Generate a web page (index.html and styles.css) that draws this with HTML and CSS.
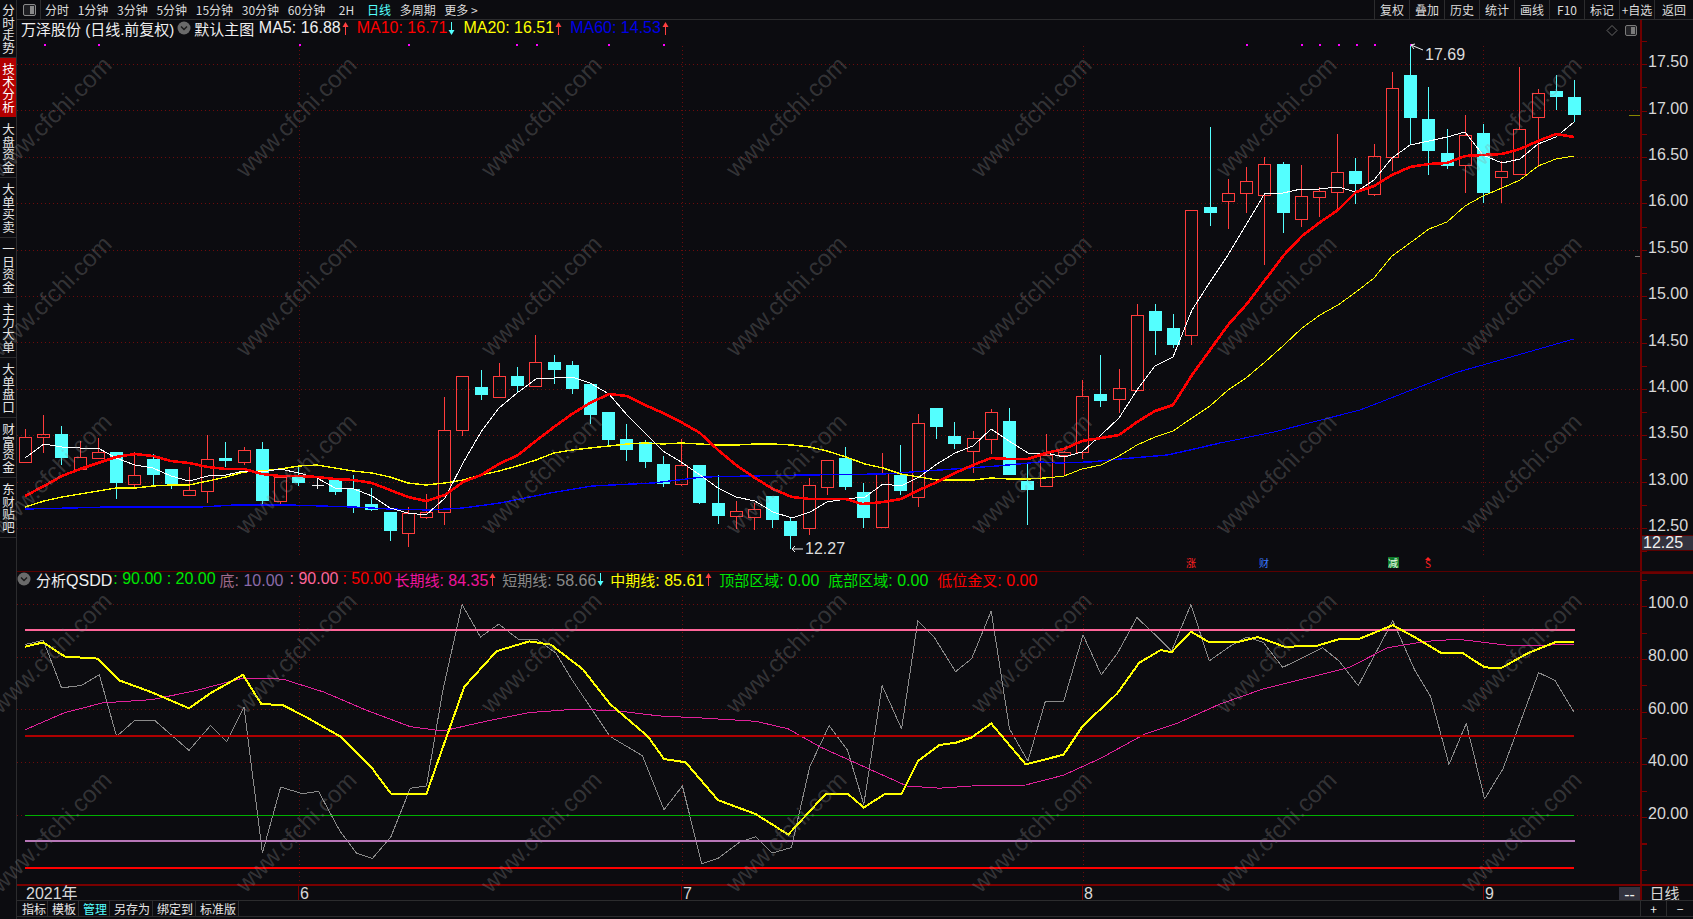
FILE: index.html
```html
<!DOCTYPE html>
<html lang="zh-CN">
<head>
<meta charset="utf-8">
<title>万泽股份 日线</title>
<link rel="stylesheet" href="styles.css">
</head>
<body>
<svg class="defs" width="0" height="0"><defs>
  <g id="arrow-up"><path class="arr-stem" d="M4.5 6V16"/><path class="arr-head" d="M4.5 3 7.5 8H1.5Z"/></g>
  <g id="arrow-down"><path class="arr-stem" d="M4.5 3V13"/><path class="arr-head" d="M4.5 16 7.5 11H1.5Z"/></g>
</defs></svg>
<div class="app">
  <nav class="side">
    <a class="side-tab first">分时走势</a>
    <a class="side-tab active">技术分析</a>
    <a class="side-tab">大盘资金</a>
    <a class="side-tab">大单买卖</a>
    <a class="side-tab">一日资金</a>
    <a class="side-tab">主力大单</a>
    <a class="side-tab">大单盘口</a>
    <a class="side-tab">财富资金</a>
    <a class="side-tab">东财贴吧</a>
  </nav>
  <main class="main">
    <header class="toolbar">
      <div class="tb-icon"><svg width="13" height="12" viewBox="0 0 13 12"><rect class="ic-frame" x="0.5" y="0.5" width="12" height="11" rx="1.5"/><rect class="ic-fill" x="7" y="2" width="4" height="8"/></svg></div>
      <div class="periods">
        <a>分时</a><a>1分钟</a><a>3分钟</a><a>5分钟</a><a>15分钟</a><a>30分钟</a><a>60分钟</a><a class="p-2h">2H</a><a class="cyan">日线</a><a>多周期</a><a>更多 &gt;</a>
      </div>
      <div class="tools">
        <a>复权</a><a>叠加</a><a>历史</a><a>统计</a><a>画线</a><a>F10</a><a>标记</a><a>+自选</a><a>返回</a>
      </div>
    </header>

    <section class="pane price-pane">
      <div class="legend price-legend">
        <span class="c-white zh">万泽股份 (日线.前复权)</span>
        <svg class="dot-ic" width="14" height="14" viewBox="0 0 14 14"><circle cx="7" cy="7" r="6.5"/><path d="M4 5.5 7 8.5 10 5.5"/></svg>
        <span class="c-white zh">默认主图</span>
        <span class="c-white first-ma">MA5: 16.88</span><svg class="arr up" width="16" height="18"><use href="#arrow-up"/></svg>
        <span class="c-red">MA10: 16.71</span><svg class="arr down" width="16" height="18"><use href="#arrow-down"/></svg>
        <span class="c-yellow">MA20: 16.51</span><svg class="arr up" width="16" height="18"><use href="#arrow-up"/></svg>
        <span class="c-blue">MA60: 14.53</span><svg class="arr up" width="16" height="18"><use href="#arrow-up"/></svg>
      </div>
      <svg id="price-plot" class="plot" width="1623" height="551" viewBox="17 20 1623 551"></svg>
      <div class="axis price-axis">
        <div class="tick">17.50</div><div class="tick">17.00</div><div class="tick">16.50</div><div class="tick">16.00</div><div class="tick">15.50</div><div class="tick">15.00</div><div class="tick">14.50</div><div class="tick">14.00</div><div class="tick">13.50</div><div class="tick">13.00</div><div class="tick">12.50</div>
        <div class="price-tag">12.25</div>
      </div>
    </section>

    <section class="pane ind-pane">
      <div class="legend ind-legend">
        <svg class="dot-ic" width="14" height="14" viewBox="0 0 14 14"><circle cx="7" cy="7" r="6.5"/><path d="M4 5.5 7 8.5 10 5.5"/></svg>
        <span class="c-white"><span class="zh">分析</span>QSDD</span>
        <span class="c-green val1">: 90.00 : 20.00</span>
        <span class="c-mauve val2"><span class="zh">底</span>: <span class="c-purple">10.00</span></span>
        <span class="c-pink val3a">: 90.00</span>
        <span class="c-red val3b">: 50.00</span>
        <span class="c-magenta val4"><span class="zh">长期线</span>: 84.35</span><svg class="arr up" width="14" height="18"><use href="#arrow-up"/></svg>
        <span class="c-gray"><span class="zh">短期线</span>: 58.66</span><svg class="arr down" width="14" height="18"><use href="#arrow-down"/></svg>
        <span class="c-yellow"><span class="zh">中期线</span>: 85.61</span><svg class="arr up" width="15" height="18"><use href="#arrow-up"/></svg>
        <span class="c-green"><span class="zh">顶部区域</span>: 0.00</span>
        <span class="c-green val5"><span class="zh">底部区域</span>: 0.00</span>
        <span class="c-red val5"><span class="zh">低位金叉</span>: 0.00</span>
      </div>
      <svg id="ind-plot" class="plot" width="1623" height="312" viewBox="17 572 1623 312"></svg>
      <div class="axis ind-axis">
        <div class="tick">100.0</div><div class="tick">80.00</div><div class="tick">60.00</div><div class="tick">40.00</div><div class="tick">20.00</div>
      </div>
    </section>

    <div class="time-axis">
      <div class="t-cell t-year">2021年</div>
      <div class="t-cell t-jun">6</div>
      <div class="t-cell t-jul">7</div>
      <div class="t-cell t-aug">8</div>
      <div class="t-cell t-sep">9</div>
      <div class="t-dash">--</div>
      <div class="t-period">日线</div>
    </div>

    <footer class="bottom-bar">
      <div class="bottom-tabs">
        <a>指标</a><a>模板</a><a class="cyan">管理</a><a>另存为</a><a>绑定到</a><a>标准版</a>
      </div>
      <div class="zoom-btns"><a>+</a><a>−</a></div>
    </footer>
  </main>
  <div id="watermark" class="watermark"></div>
</div>
<script src="chart.js"></script>
</body>
</html>
```
FILE: styles.css
```css
* { box-sizing: border-box; }
html, body { margin: 0; padding: 0; background: #0c0c10; }
body {
  width: 1693px; height: 919px; overflow: hidden;
  font-family: "Liberation Sans", "Noto Sans CJK SC", sans-serif;
  color: #dcdcdc;
}
a { display: block; }
.defs { display: block; height: 0; }

.app { position: relative; display: grid; grid-template-columns: 17px 1676px; width: 1693px; height: 919px; overflow: hidden; }

/* left vertical tabs */
.side { display: flex; flex-direction: column; border-right: 1px solid #2c2c2e; height: 919px; }
.side-tab {
  height: 60px; flex: none; border-bottom: 1px solid #2c2c2e;
  display: flex; align-items: center; justify-content: center;
  writing-mode: vertical-rl; text-orientation: upright;
  font: 12.5px/16px "Noto Sans CJK SC", sans-serif; color: #e6e6e6;
}
.side-tab.first { height: 58px; }
.side-tab.active { background: #b30000; color: #fff; border-bottom: 1px solid #0c0c10; }

/* top toolbar */
.main { display: flex; flex-direction: column; width: 1676px; }
.toolbar { height: 20px; flex: none; display: flex; align-items: stretch; border-bottom: 1px solid #2c2c2e; font: 12px/19px "Noto Sans CJK SC", sans-serif; color: #dcdcdc; }
.tb-icon { width: 24px; display: flex; align-items: center; justify-content: center; border-right: 1px solid #2c2c2e; padding-left: 2px; }
.ic-frame { fill: #1e1e22; stroke: #8a8a8a; }
.ic-fill { fill: #8a8a8a; }
.periods { display: flex; gap: 8.7px; padding-left: 4px; flex: 1; }
.periods a { white-space: nowrap; }
.periods .p-2h { margin-left: 5px; margin-right: 4px; }
.cyan { color: #54ffff; }
.tools { display: flex; }
.tools a { width: 35px; border-left: 1px solid #2c2c2e; text-align: center; }
.tools a:last-child { width: 39px; }

/* panes */
.pane { position: relative; display: grid; grid-template-columns: 1623px 53px; flex: none; }
.price-pane { height: 552px; border-bottom: 1px solid #5a0000; }
.ind-pane { height: 312px; }
.plot { display: block; }
.legend { position: absolute; left: 0; display: flex; align-items: center; white-space: nowrap; font-size: 16px; height: 20px; }
.zh { font-size: 15px; }
.price-legend { top: -2px; padding-left: 4px; }
.price-legend .dot-ic { margin: 0 3px 0 3px; }
.first-ma { margin-left: 4.5px; }
.ind-legend { top: -3px; padding-left: 0; }
.ind-legend .dot-ic { margin-right: 5px; }
.val1 { margin-left: 1px; }
.val2 { margin-left: 4px; }
.val3a { margin-left: 6px; }
.val3b { margin-left: 4px; }
.val4 { margin-left: 3px; }
.val5 { margin-left: 9px; }
.arr { flex: none; }
.arr-stem { fill: none; stroke: currentColor; stroke-width: 1; }
.arr-head { fill: currentColor; }
.up { color: #ff4040; }
.down { color: #54ffff; }
.c-white { color: #f0f0f0; }
.c-red { color: #ff0000; }
.c-yellow { color: #ffff00; }
.c-blue { color: #0000e6; }
.c-green { color: #00e600; }
.c-mauve { color: #a06a8a; }
.c-purple { color: #8a6aa8; }
.c-pink { color: #ff6699; }
.c-magenta { color: #f0149b; }
.c-gray { color: #8a8a8a; }
.dot-ic { flex: none; }
.dot-ic circle { fill: #6a6a6a; }
.dot-ic path { fill: none; stroke: #1a1a1a; stroke-width: 1.4; }

/* right axes */
.axis { position: relative; border-left: 2px solid #6e0000; font-size: 16px; color: #d8d8d8; background-repeat: no-repeat; }
.price-axis { padding-top: 19px; background-image: repeating-linear-gradient(#7a0000 0 1px, transparent 1px 23.2px); background-size: 5px 100%; background-position: 0 21px; }
.ind-axis { padding-top: 3px; background-image: repeating-linear-gradient(#7a0000 0 1px, transparent 1px 26.35px); background-size: 5px 100%; background-position: 0 6px; border-top: 2px solid #6e0000; }
.tick { height: 46.4px; display: flex; align-items: center; padding-left: 6px; }
.ind-axis .tick { height: 52.7px; }
.price-tag { position: absolute; left: 0; right: 0; top: 515px; height: 16px; line-height: 14px; background: #33333f; border-top: 1px solid #5a0000; border-bottom: 1px solid #5a0000; padding-left: 1px; color: #f0f0f0; }

/* time axis */
.time-axis { height: 16px; flex: none; display: flex; border-top: 2px solid #7a0000; font-size: 16px; line-height: 15px; color: #d8d8d8; }
.t-cell { border-left: 1px solid #7a0000; padding-left: 1px; }
.t-year { width: 281px; padding-left: 9px; border-left: 0; }
.t-jun { width: 383px; }
.t-jul { width: 401px; }
.t-aug { width: 401px; }
.t-sep { width: 136px; }
.t-dash { width: 21px; background: #33333f; text-align: center; color: #f0f0f0; margin-top: 1px; }
.t-period { width: 53px; border-left: 2px solid #6e0000; text-align: center; font-size: 15px; padding-right: 6px; }

/* bottom bar */
.bottom-bar { height: 17px; flex: none; display: flex; justify-content: space-between; border-top: 1px solid #2c2c2e; border-bottom: 1px solid #2c2c2e; font: 12px/15px "Noto Sans CJK SC", sans-serif; color: #e6e6e6; }
.bottom-tabs { display: flex; }
.bottom-tabs a { padding: 0 2px 0 4px; border-right: 1px solid #2c2c2e; }
.bottom-tabs a:first-child { padding: 0 1px 0 5px; }
.zoom-btns { display: flex; width: 53px; border-left: 1px solid #2c2c2e; }
.zoom-btns a { width: 26px; text-align: center; color: #f0f0f0; }
.zoom-btns a:first-child { border-right: 1px solid #2c2c2e; }

/* watermark overlay */
.watermark {
  position: absolute; left: -71px; top: 28px; pointer-events: none;
  display: grid; grid-template-columns: repeat(7, 245px); grid-auto-rows: 178.7px;
}
.wm { display: flex; align-items: center; justify-content: center; transform: rotate(-45deg); font-size: 24px; color: rgba(150,150,150,.3); white-space: nowrap; }

/* svg chart parts */
.grid-line { stroke: #6e0c0c; stroke-width: 1; stroke-dasharray: 1 3; shape-rendering: crispEdges; }
.wick-r { stroke: #ff3c3c; stroke-width: 1; shape-rendering: crispEdges; }
.body-r { stroke: #ff3c3c; stroke-width: 1; fill: none; shape-rendering: crispEdges; }
.wick-c { stroke: #54ffff; stroke-width: 1; shape-rendering: crispEdges; }
.body-c { fill: #54ffff; shape-rendering: crispEdges; }
.doji { stroke: #eeeeee; stroke-width: 1; shape-rendering: crispEdges; }
.ln { fill: none; stroke-linejoin: round; shape-rendering: crispEdges; }
.ln-white { stroke: #ffffff; stroke-width: 1; }
.ln-red { stroke: #ff0000; stroke-width: 2.6; }
.ln-yellow { stroke: #ffff00; stroke-width: 1.4; }
.ln-yellow.thin { stroke-width: 1; }
.ln-blue { stroke: #0000ff; stroke-width: 1.4; }
.ln-blue.thin { stroke-width: 1; }
.ln-mid { stroke: #ffff00; stroke-width: 2; }
.ln-long { stroke: #e0209a; stroke-width: 1; }
.ln-short { stroke: #8a8a8a; stroke-width: 1; }
.h-pink { stroke: #ff6699; stroke-width: 2; shape-rendering: crispEdges; }
.h-dred { stroke: #b00000; stroke-width: 2; shape-rendering: crispEdges; }
.h-green { stroke: #00b000; stroke-width: 1; shape-rendering: crispEdges; }
.h-purple { stroke: #b877b8; stroke-width: 2; shape-rendering: crispEdges; }
.h-red { stroke: #ff0000; stroke-width: 2; shape-rendering: crispEdges; }
.mark { fill: #ff00ff; shape-rendering: crispEdges; }
.ext-text { fill: #dcdcdc; font-size: 16px; }
.ext-line { stroke: #f0f0f0; stroke-width: 1; fill: none; }
.sig { font: 10px "Noto Sans CJK SC", sans-serif; text-anchor: middle; }
.sig-red { fill: #ff2020; }
.sig-blue { fill: #3a7aff; }
.sig-box { fill: #0f7a2a; }
.sig-white { fill: #e8ffe8; }
.diamond { fill: none; stroke: #666; stroke-width: 1; }
.mini-frame { fill: #222226; stroke: #7a7a7a; }
.mini-fill { fill: #7a7a7a; }
.side-mark { stroke: #888800; stroke-width: 1; shape-rendering: crispEdges; }
.side-mark2 { stroke: #777; stroke-width: 1; shape-rendering: crispEdges; }
```
FILE: chart.js
```js
// candle rows: [high, bodyTop, bodyBottom, low, kind] in chart pixels; kind r=up, c=down, d=doji
var candles = [
[429,437,462,462,'r'],[415,434,437,453,'r'],[426,434,458,465,'c'],[441,457,469,469,'r'],[438,452,458,459,'r'],
[452,452,483,499,'c'],[452,475,484,487,'r'],[454,459,475,486,'c'],[469,469,484,489,'c'],[467,490,495,496,'r'],
[435,459,491,503,'r'],[442,458,461,467,'c'],[447,450,462,465,'r'],[442,449,501,504,'c'],[476,477,501,505,'r'],
[465,477,483,486,'c'],[478,485,485,489,'d'],[478,480,492,495,'c'],[475,489,507,513,'c'],[488,504,510,511,'c'],
[512,512,531,541,'c'],[507,513,533,547,'r'],[494,512,517,519,'r'],[397,430,512,525,'r'],[376,376,430,436,'r'],
[370,387,395,400,'c'],[363,376,397,397,'r'],[367,376,386,393,'c'],[335,362,386,386,'r'],[355,362,370,384,'c'],
[361,365,389,394,'c'],[384,384,415,424,'c'],[412,412,440,446,'c'],[424,439,450,461,'c'],[440,442,462,468,'c'],
[456,464,484,487,'c'],[439,465,484,486,'r'],[465,465,503,504,'c'],[475,503,516,524,'c'],[501,511,516,529,'r'],
[503,509,517,530,'r'],[496,496,520,528,'c'],[517,521,536,549,'c'],[478,485,528,535,'r'],[460,460,487,495,'r'],
[447,458,487,490,'c'],[483,492,518,528,'c'],[453,473,527,527,'r'],[445,475,491,495,'c'],[414,423,497,507,'r'],
[408,408,427,439,'c'],[422,436,444,449,'c'],[431,438,451,473,'r'],[409,412,439,454,'r'],[408,421,475,475,'c'],
[464,481,490,525,'c'],[434,455,486,486,'r'],[451,452,455,476,'r'],[380,396,452,459,'r'],[355,394,401,407,'c'],
[369,388,399,413,'r'],[304,315,390,390,'r'],[304,311,331,355,'c'],[314,328,345,348,'c'],[210,210,335,345,'r'],
[127,207,213,226,'c'],[179,193,201,229,'r'],[167,181,193,213,'r'],[157,164,195,265,'r'],[162,164,213,233,'c'],
[165,196,219,227,'r'],[187,191,197,217,'r'],[134,172,192,212,'r'],[158,171,184,204,'c'],[144,156,194,196,'r'],
[72,88,157,171,'r'],[45,75,118,145,'c'],[87,119,151,175,'c'],[129,153,166,169,'c'],[115,135,165,193,'r'],
[124,133,193,203,'c'],[161,171,177,203,'r'],[67,129,174,174,'r'],[89,93,117,167,'r'],[75,91,97,110,'c'],[80,97,115,122,'c']
];

var ma5 = [25,458,44,444,62,447,80,448,98,448,116,458,135,465,153,468,171,476,189,481,208,476,226,475,244,471,262,472,280,469,299,473,317,478,335,488,354,489,372,496,390,508,408,513,426,515,445,498,463,463,481,432,499,408,517,393,536,379,554,378,572,377,590,383,609,394,627,415,645,433,663,451,681,462,700,475,718,488,736,497,755,501,773,512,792,518,810,512,827,502,846,499,865,497,883,484,901,486,919,477,937,464,955,453,973,446,991,429,1009,441,1028,453,1046,453,1064,457,1082,452,1101,435,1119,418,1137,390,1155,366,1173,357,1192,310,1210,282,1228,255,1246,225,1265,193,1283,193,1301,189,1319,189,1338,187,1356,192,1374,180,1392,158,1410,145,1429,141,1447,137,1465,132,1483,155,1502,163,1520,159,1538,144,1556,137,1574,122];
var ma10 = [25,496,44,486,62,476,80,469,98,463,116,457,135,454,153,456,171,461,189,463,208,467,226,469,244,469,262,474,280,476,299,476,317,477,335,479,353,480,372,483,390,490,408,497,426,501,445,495,463,482,481,475,499,464,518,455,537,440,554,427,572,414,590,403,609,394,627,396,645,405,663,413,681,422,700,433,718,450,736,465,755,478,773,489,792,497,810,499,827,499,846,499,862,504,883,502,901,499,919,490,937,482,955,473,973,465,991,458,1009,459,1028,459,1046,453,1064,449,1082,441,1101,438,1119,435,1137,422,1155,411,1173,405,1192,375,1210,350,1228,325,1246,305,1265,280,1284,255,1302,236,1319,223,1338,210,1356,192,1374,186,1392,175,1410,167,1429,164,1447,163,1465,156,1483,155,1502,154,1520,149,1538,141,1556,134,1574,137];
var ma20a = [25,507,44,501,62,497,80,494,98,491,116,488,135,488,153,486,171,485,189,485,208,481,226,477,244,472,262,471,280,469,299,466,317,465,335,468,353,471,372,473,390,477,408,483,426,485,445,483,463,480,481,475,499,471,517,466,536,460,554,453,572,450,590,448,609,446,627,444,645,443,663,444,681,443,700,444,718,445,736,445,755,444,773,444,792,445,810,447,827,451,846,457,865,464,883,468,901,474,919,477,937,480,955,480,973,480,991,478,1009,479,1028,479,1046,478];
var ma20b = [1046,478,1064,476,1082,469,1101,465,1119,456,1137,445,1155,437,1173,431,1192,418,1210,406,1228,390,1246,378,1265,362,1284,345,1302,328,1320,315,1338,305,1356,292,1374,278,1392,256,1410,243,1429,229,1447,222,1465,206,1483,196,1502,188,1520,180,1538,166,1556,159,1574,156];
var ma60a = [25,509,71,508,108,507,163,507,200,507,235,505,290,505,353,507,390,509,430,510,463,508,500,503,550,493,592,486,653,483,703,477,749,476,806,475,883,474,940,470,997,466,1040,462,1058,463,1090,462,1120,459,1167,455,1190,450,1220,443];
var ma60b = [1220,443,1274,432,1360,410,1458,372,1574,339];

// indicator series, read on the 1568-wide scale
var k = 1693 / 1568;
var longLine = [23,676,60,660,95,651,140,648,180,640,225,628,262,629,300,641,340,658,380,673,410,677,450,668,490,660,530,657,570,658,610,663,650,665,700,668,730,675,760,692,800,710,840,728,870,730,900,728,950,727,985,718,1020,702,1060,680,1090,670,1130,652,1170,638,1210,628,1250,618,1285,600,1320,594,1350,592,1400,598,1458,597];
var midLine = [23,599,40,595,60,608,90,610,110,630,140,641,175,656,195,642,225,625,242,652,262,653,285,665,315,682,345,712,362,735,395,735,430,636,460,603,490,594,510,597,540,620,565,652,600,682,615,703,635,706,665,741,700,754,730,773,765,735,785,735,800,748,820,735,835,735,850,705,870,690,885,688,900,683,918,670,950,708,985,699,1003,672,1035,642,1055,614,1075,602,1085,604,1103,585,1120,595,1145,595,1165,590,1190,599,1220,598,1240,592,1258,592,1290,579,1310,590,1335,605,1355,605,1375,618,1390,619,1415,605,1440,595,1458,595];
var shortLine = [23,597,40,593,57,637,75,635,92,625,108,682,125,667,143,667,175,695,195,672,210,687,226,655,243,790,260,729,280,735,295,733,315,770,330,790,345,795,362,775,380,730,395,728,410,640,428,560,445,590,462,578,480,592,497,592,515,605,530,630,565,682,595,700,615,750,632,728,650,800,665,795,685,780,700,775,715,790,733,785,750,710,768,672,785,695,800,745,817,635,835,675,850,575,865,590,885,622,900,610,918,566,935,675,952,705,968,650,985,650,1003,588,1020,625,1035,605,1053,572,1070,588,1085,603,1103,560,1120,612,1140,598,1155,590,1170,595,1188,618,1205,610,1225,600,1240,612,1258,635,1290,575,1310,620,1325,645,1342,708,1358,670,1375,740,1392,712,1425,623,1440,630,1458,660];

function pts(a, s) {
  var out = [];
  for (var i = 0; i < a.length; i += 2) out.push((a[i] * s).toFixed(1) + ',' + (a[i + 1] * s).toFixed(1));
  return out.join(' ');
}
function line(x1, y1, x2, y2, c) {
  return '<line class="' + c + '" x1="' + x1 + '" y1="' + y1 + '" x2="' + x2 + '" y2="' + y2 + '"/>';
}
function poly(a, s, c) {
  return '<polyline class="ln ' + c + '" points="' + pts(a, s) + '"/>';
}

var vGrid = [299, 682, 1083, 1483];
var price = '';
var i;
for (i = 0; i <= 10; i++) {
  var gy = Math.round(64 + 46.4 * i) + 0.5;
  price += line(17, gy, 1640, gy, 'grid-line');
}
vGrid.forEach(function (x) { price += line(x + 0.5, 46, x + 0.5, 558, 'grid-line'); });

candles.forEach(function (c, n) {
  var x = Math.round(25 + 18.225 * n) + 0.5;
  if (c[4] === 'd') {
    price += line(x - 6, c[1] + 0.5, x + 6, c[1] + 0.5, 'doji') + line(x, c[0], x, c[3], 'doji');
  } else if (c[4] === 'r') {
    if (c[0] < c[1]) price += line(x, c[0], x, c[1], 'wick-r');
    if (c[3] > c[2]) price += line(x, c[2], x, c[3], 'wick-r');
    price += '<rect class="body-r" x="' + (x - 6) + '" y="' + (c[1] + 0.5) + '" width="12" height="' + (c[2] - c[1]) + '"/>';
  } else {
    price += line(x, c[0], x, c[3], 'wick-c');
    price += '<rect class="body-c" x="' + (x - 6.5) + '" y="' + c[1] + '" width="13" height="' + (c[2] - c[1]) + '"/>';
  }
});

price += poly(ma60a, 1, 'ln-blue') + poly(ma60b, 1, 'ln-blue thin') + poly(ma20a, 1, 'ln-yellow') + poly(ma20b, 1, 'ln-yellow thin') + poly(ma5, 1, 'ln-white') + poly(ma10, 1, 'ln-red');

[44, 98, 299, 408, 516, 536, 608, 663, 1246, 1301, 1319, 1338, 1356, 1374, 1410].forEach(function (x) {
  price += '<rect class="mark" x="' + x + '" y="44" width="2" height="2"/>';
});

price += '<path class="ext-line" d="M1423 50 1411 45 M1411 45 1415 44 M1411 45 1414 49"/>';
price += '<text class="ext-text" x="1425" y="60">17.69</text>';
price += '<path class="ext-line" d="M803 549 H792 M792 549 795 546 M792 549 795 552"/>';
price += '<text class="ext-text" x="805" y="554">12.27</text>';

price += '<text class="sig sig-red" x="1191" y="567">涨</text>';
price += '<text class="sig sig-blue" x="1264" y="567">财</text>';
price += '<rect class="sig-box" x="1388" y="557" width="11" height="11"/><text class="sig sig-white" x="1393" y="567">减</text>';
price += '<text class="sig sig-red" x="1428" y="568">S</text><path class="sig-red" d="M1428 557 1431 560 H1425 Z"/>';

price += '<path class="diamond" d="M1612 25.5 1617 30.5 1612 35.5 1607 30.5 Z"/>';
price += '<rect class="mini-frame" x="1625.5" y="25.5" width="11" height="10" rx="1.5"/><rect class="mini-fill" x="1631" y="27" width="4" height="7"/>';
price += line(1629, 115.5, 1640, 115.5, 'side-mark') + line(1635, 256.5, 1640, 256.5, 'side-mark2');

document.getElementById('price-plot').innerHTML = price;

var ind = '';
[604, 656.6, 709, 762, 814.6].forEach(function (y) {
  var gy = Math.round(y) + 0.5;
  ind += line(17, gy, 1640, gy, 'grid-line');
});
vGrid.forEach(function (x) { ind += line(x + 0.5, 596, x + 0.5, 884, 'grid-line'); });
ind += poly(shortLine, k, 'ln-short') + poly(longLine, k, 'ln-long');
ind += line(25, 630, 1575, 630, 'h-pink') + line(25, 736, 1574, 736, 'h-dred') + line(25, 815.5, 1574, 815.5, 'h-green') + line(25, 841, 1575, 841, 'h-purple') + line(25, 868, 1574, 868, 'h-red');
ind += poly(midLine, k, 'ln-mid');
document.getElementById('ind-plot').innerHTML = ind;

var wm = '';
for (i = 0; i < 35; i++) wm += '<div class="wm">www.cfchi.com</div>';
document.getElementById('watermark').innerHTML = wm;
```
